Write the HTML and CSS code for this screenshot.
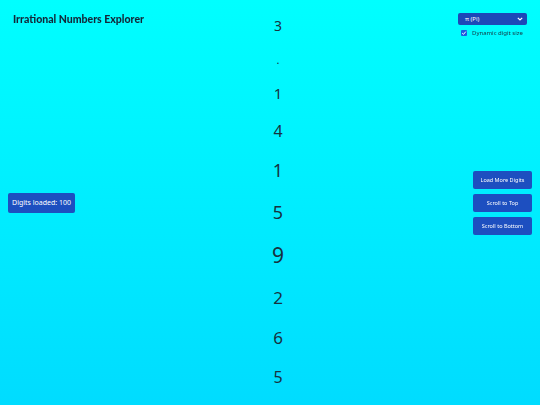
FILE: index.html
```html
<!DOCTYPE html>
<html lang="en">
<head>
<meta charset="utf-8">
<title>Irrational Numbers Explorer</title>
<link rel="stylesheet" href="styles.css">
</head>
<body>
<header class="title-bar">
  <h1 class="title">Irrational Numbers Explorer</h1>
</header>

<div class="controls">
  <div class="select-wrap">
    <span class="select-label">π (Pi)</span>
    <svg class="chev" width="6" height="4" viewBox="0 0 6 4"><path d="M0.8 0.8 L3 3 L5.2 0.8" fill="none" stroke="#fff" stroke-width="1.2"/></svg>
  </div>
  <label class="check-row">
    <span class="check">
      <svg width="6" height="6" viewBox="0 0 6 6"><path d="M1.2 3.1 L2.5 4.3 L4.8 1.6" fill="none" stroke="#fff" stroke-width="1"/></svg>
    </span>
    <span class="check-text">Dynamic digit size</span>
  </label>
</div>

<div class="left-panel">
  <div class="badge">Digits loaded: 100</div>
</div>

<div class="right-panel">
  <button class="btn">Load More Digits</button>
  <button class="btn">Scroll to Top</button>
  <button class="btn">Scroll to Bottom</button>
</div>

<main class="digits">
  <div class="digit" style="font-size:14px">3</div>
  <div class="digit" style="font-size:11px">.</div>
  <div class="digit" style="font-size:15px">1</div>
  <div class="digit" style="font-size:16px">4</div>
  <div class="digit" style="font-size:18px">1</div>
  <div class="digit" style="font-size:18px">5</div>
  <div class="digit" style="font-size:21px">9</div>
  <div class="digit" style="font-size:17px">2</div>
  <div class="digit" style="font-size:17px">6</div>
  <div class="digit" style="font-size:16px">5</div>
  <div class="digit" style="font-size:15px">3</div>
  <div class="digit" style="font-size:15px">5</div>
  <div class="digit" style="font-size:14px">8</div>
</main>
</body>
</html>
```

FILE: styles.css
```css
html, body {
  margin: 0;
  padding: 0;
}
body {
  font-family: "Noto Sans", "DejaVu Sans", sans-serif;
  background: linear-gradient(180deg, #00ffff 0px, #00dcff 405px);
  background-attachment: fixed;
  min-height: 100vh;
  color: #17323f;
}
.title-bar {
  position: fixed;
  top: 0;
  left: 0;
  padding: 13px 13px;
}
.title {
  margin: 0;
  font-family: Lato, "Noto Sans", sans-serif;
  font-size: 10.5px;
  font-weight: 900;
  color: #12283a;
}
.controls {
  position: fixed;
  top: 13px;
  right: 13px;
  display: flex;
  flex-direction: column;
  align-items: flex-start;
  gap: 5px;
}
.select-wrap {
  width: 69px;
  height: 12px;
  box-sizing: border-box;
  background: #1d48b8;
  border-radius: 2px;
  display: flex;
  align-items: center;
  justify-content: space-between;
  padding: 0 4px 0 7px;
}
.select-label {
  color: #fff;
  font-size: 6px;
  line-height: 1;
}
.check-row {
  display: flex;
  align-items: center;
  gap: 5px;
  padding-left: 3px;
}
.check {
  width: 6px;
  height: 6px;
  background: #1d5be0;
  border-radius: 1px;
  display: flex;
}
.check-text {
  font-size: 6px;
  color: #17323f;
  line-height: 1;
}
.left-panel {
  position: fixed;
  left: 8px;
  top: 0;
  bottom: 0;
  display: flex;
  align-items: center;
}
.badge {
  width: 67px;
  height: 20px;
  box-sizing: border-box;
  background: #1d4fc0;
  color: #fff;
  font-size: 7px;
  border-radius: 2px;
  display: flex;
  align-items: center;
  justify-content: center;
}
.right-panel {
  position: fixed;
  right: 8px;
  top: 0;
  bottom: 0;
  display: flex;
  flex-direction: column;
  justify-content: center;
  gap: 5px;
}
.btn {
  width: 59px;
  height: 18px;
  border: none;
  border-radius: 2px;
  background: #1d4fc0;
  color: #fff;
  font-family: "Noto Sans", "DejaVu Sans", sans-serif;
  font-size: 5.5px;
  padding: 0;
}
.digits {
  display: flex;
  flex-direction: column;
  align-items: center;
  gap: 16px;
  padding: 16px 0 20px 16px;
}
.digit {
  line-height: 1.4;
  color: #17323f;
}
```
